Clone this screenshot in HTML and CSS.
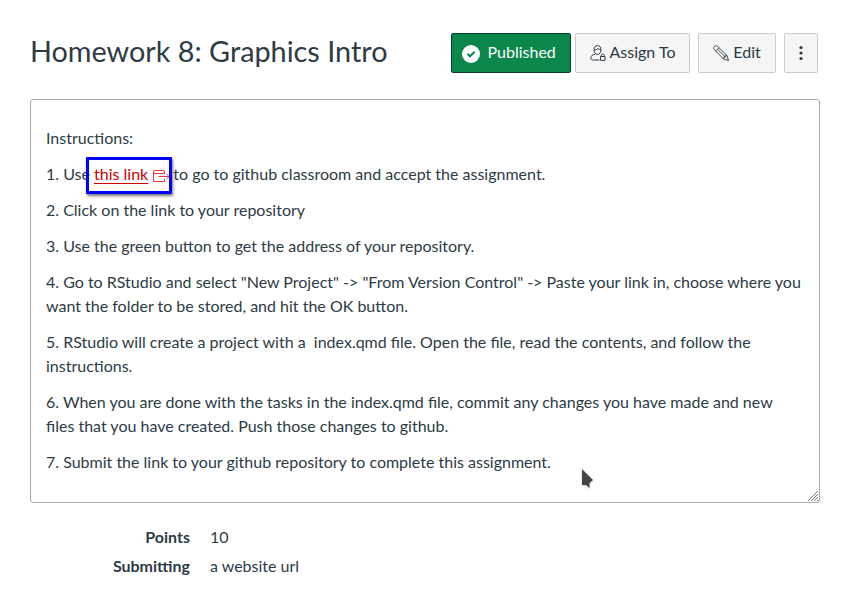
FILE: index.html
```html
<!DOCTYPE html>
<html lang="en">
<head>
<meta charset="utf-8">
<title>Homework 8: Graphics Intro</title>
<link rel="stylesheet" href="styles.css">
</head>
<body>
<header class="title-bar">
  <h1>Homework 8: Graphics Intro</h1>
  <div class="actions">
    <button class="btn published"><svg width="18" height="18" viewBox="0 0 18 18"><circle cx="9" cy="9" r="9" fill="#fff"/><path d="M5.500 8.800l2.500 2.500 4.600-4.600" fill="none" stroke="#0b874b" stroke-width="2"/></svg><span>Published</span></button>
    <button class="btn assign"><svg width="16" height="16" viewBox="0 0 16 16" fill="none" stroke="#2d3b45"><path d="M9.500 15H3.500C1.500 15 .8 14 .8 12.800c0-2 1.800-3.300 4-3.300M4 4.500C4 2 5.300.6 7.500.6S11 2 11 4.500c0 3-1.500 5-3.500 5S4 7.500 4 4.500zM4 5c1.800 0 3-.5 4-1.500 1 1 2 1.500 3 1.500M10.500 11.500h4.500v3.800h-4.500zM11.300 11.500v-1c0-2 2.900-2 2.900 0v1"/></svg><span>Assign To</span></button>
    <button class="btn edit"><svg width="16" height="16" viewBox="0 0 16 16" fill="none" stroke="#2d3b45" stroke-width=".9"><path d="M.7 3.200Q.5 2.300 1.400 1.400T3.200.7L4.500 1.300 14 10.500l1.500 5-5-1.500L1.300 4.500zM2.700 6l3.300-3.300M4.600 4.300l8 8M10.500 14l.3-1.800 1.400-.1.100-1.400 1.700-.2"/></svg><span>Edit</span></button>
    <button class="btn more" aria-label="More"><svg width="4" height="16" viewBox="0 0 4 16" fill="#2d3b45"><circle cx="2" cy="2.500" r="1.600"/><circle cx="2" cy="8" r="1.600"/><circle cx="2" cy="13.500" r="1.600"/></svg></button>
  </div>
</header>
<main class="description">
  <p>Instructions:</p>
  <p>1. Use <span class="target"><a href="#">this link</a> <svg width="17" height="14" viewBox="0 0 17 14" fill="none" stroke="#d22" stroke-width=".9"><path d="M11.500 5V3Q11.500 1.500 10 1.500H2Q.5 1.500.5 3V12.500H11.500V10M.5 4.500H11.500M5.500 7.500H16M13.500 5l2.500 2.500-2.500 2.500"/></svg></span>to go to github classroom and accept the assignment.</p>
  <p>2. Click on the link to your repository</p>
  <p>3. Use the green button to get the address of your repository.</p>
  <p>4. Go to RStudio and select "New Project" -&gt; "From Version Control" -&gt; Paste your link in, choose where you want the folder to be stored, and hit the OK button.</p>
  <p>5. RStudio will create a project with a &nbsp;index.qmd file. Open the file, read the contents, and follow the instructions.</p>
  <p>6. When you are done with the tasks in the index.qmd file, commit any changes you have made and new files that you have created. Push those changes to github.</p>
  <p>7. Submit the link to your github repository to complete this assignment.</p>
  <svg class="cursor" width="14" height="22" viewBox="0 0 14 22"><path d="M1 1v16h4l3.500 3v-5l3.500-3z" fill="#444"/></svg>
  <svg class="grip" width="12" height="12" viewBox="0 0 12 12" stroke="#777"><path d="M1 11L11 1M4 11l7-7M7 11l4-4M10 11l1-1"/></svg>
</main>
<dl class="details">
  <dt>Points</dt><dd>10</dd>
  <dt>Submitting</dt><dd>a website url</dd>
</dl>
</body>
</html>
```
FILE: styles.css
```css
*, *::before { box-sizing: border-box; }
body { margin: 0; padding: 33px 25px 0 30px; background: #fff; color: #2d3b45; font: 16px/24px Lato, sans-serif; }
.title-bar { display: flex; justify-content: space-between; height: 40px; width: 788px; }
h1 { margin: 0; font-size: 28.8px; line-height: 36px; font-weight: 400; white-space: nowrap; }
.actions { display: flex; }
.btn { display: flex; align-items: center; justify-content: center; height: 40px; padding: 0; border: 1px solid #c7cdd1; border-radius: 2px; background: #f5f5f5; color: #2d3b45; font: 16px/20px Lato, sans-serif; white-space: nowrap; }
.btn span { padding-bottom: 2px; }
.published { justify-content: flex-start; padding-left: 9.5px; width: 120px; gap: 8px; margin-right: 4px; border-color: #06402a; background: #0b874b; color: #fff; }
.published svg { position: relative; top: 1px; }
.assign { width: 115px; gap: 4px; margin-right: 8px; }
.edit { width: 78px; gap: 4px; margin-right: 8px; }
.more { width: 34px; }
.description { position: relative; width: 790px; height: 404px; margin-top: 26px; padding: 26px 15px 0; border: 1px solid #aaa; border-radius: 3px; }
p { margin: 0 0 12px; }
.target { position: relative; margin-right: 4px; }
.target::before { content: ""; position: absolute; left: -8px; top: -7px; width: 86px; height: 37px; border: 3px solid #00f; border-radius: 1px; box-shadow: 1px 2px 3px #0008; }
.target a { color: #c00; text-underline-offset: 3px; text-decoration-thickness: 1px; text-decoration-skip-ink: none; }
.target svg { margin-left: 1px; margin-right: -1px; vertical-align: -3px; }
.cursor { position: absolute; left: 550px; top: 368px; filter: drop-shadow(0 1px 1px #0003); }
.grip { position: absolute; right: 0; bottom: 0; }
.details { display: grid; grid-template-columns: 160px 1fr; gap: 5px 20px; margin: 22px 0 0; }
dt { font-weight: 700; text-align: right; }
dd { margin: 0; }
```
